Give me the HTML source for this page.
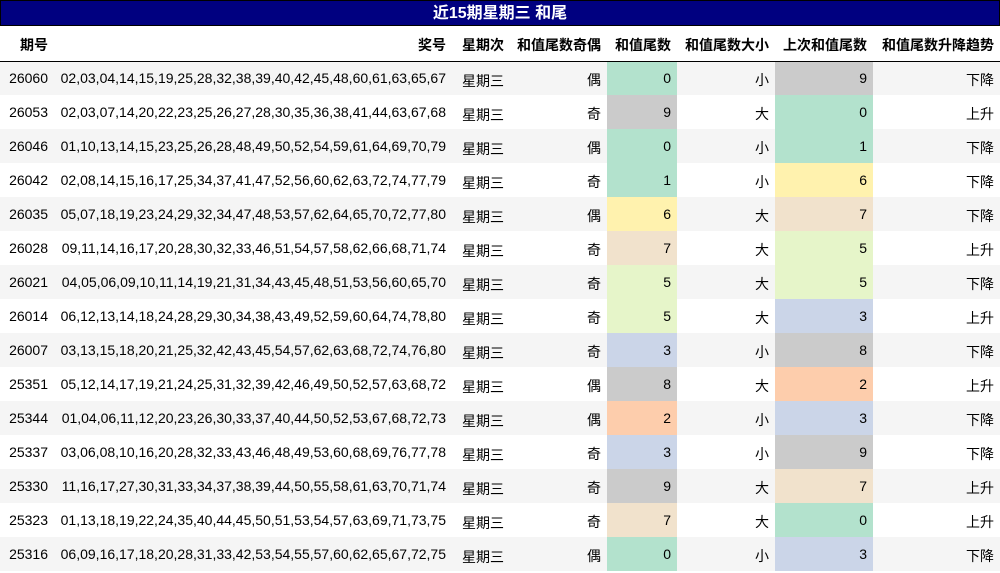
<!DOCTYPE html><html><head><meta charset="utf-8"><style>
body{margin:0;width:1000px;height:573px;overflow:hidden;background:#fff;font-family:"Liberation Sans","Noto Sans CJK SC",sans-serif;color:#000}
.t{position:absolute;left:0;top:0;width:998px;height:24px;background:#000080;border:1px solid #000;color:#fff;font-weight:bold;font-size:16px;text-align:center;line-height:26px}
table{position:absolute;left:0;top:26px;width:1000px;border-collapse:collapse;table-layout:fixed;font-size:14px}
th{height:35px;box-sizing:border-box;font-weight:bold;text-align:right;padding:4px 6px 0 0;border-bottom:1px solid #000;vertical-align:middle;line-height:20px}
td{height:34px;box-sizing:border-box;padding:0 6px 0 0;text-align:right;vertical-align:middle;line-height:20px}
td.c{padding-top:6px}
td.z{padding-top:4px}
tr:nth-child(odd) td{background:#f5f5f5}
td.a{background:#b3e2cd!important}td.b{background:#cbcbcb!important}td.y{background:#fff2ae!important}td.e{background:#f1e2cc!important}td.g{background:#e6f5c9!important}td.u{background:#cbd5e8!important}td.o{background:#fdcdac!important}
</style></head><body>
<div class="t">近15期星期三 和尾</div>
<table>
<colgroup><col style="width:54px"><col style="width:398px"><col style="width:58px"><col style="width:97px"><col style="width:70px"><col style="width:98px"><col style="width:98px"><col style="width:127px"></colgroup>
<thead><tr><th>期号</th><th>奖号</th><th>星期次</th><th>和值尾数奇偶</th><th>和值尾数</th><th>和值尾数大小</th><th>上次和值尾数</th><th>和值尾数升降趋势</th></tr></thead>
<tbody>
<tr><td>26060</td><td>02,03,04,14,15,19,25,28,32,38,39,40,42,45,48,60,61,63,65,67</td><td class="c">星期三</td><td class="z">偶</td><td class="a">0</td><td class="z">小</td><td class="b">9</td><td class="z">下降</td></tr>
<tr><td>26053</td><td>02,03,07,14,20,22,23,25,26,27,28,30,35,36,38,41,44,63,67,68</td><td class="c">星期三</td><td class="z">奇</td><td class="b">9</td><td class="z">大</td><td class="a">0</td><td class="z">上升</td></tr>
<tr><td>26046</td><td>01,10,13,14,15,23,25,26,28,48,49,50,52,54,59,61,64,69,70,79</td><td class="c">星期三</td><td class="z">偶</td><td class="a">0</td><td class="z">小</td><td class="a">1</td><td class="z">下降</td></tr>
<tr><td>26042</td><td>02,08,14,15,16,17,25,34,37,41,47,52,56,60,62,63,72,74,77,79</td><td class="c">星期三</td><td class="z">奇</td><td class="a">1</td><td class="z">小</td><td class="y">6</td><td class="z">下降</td></tr>
<tr><td>26035</td><td>05,07,18,19,23,24,29,32,34,47,48,53,57,62,64,65,70,72,77,80</td><td class="c">星期三</td><td class="z">偶</td><td class="y">6</td><td class="z">大</td><td class="e">7</td><td class="z">下降</td></tr>
<tr><td>26028</td><td>09,11,14,16,17,20,28,30,32,33,46,51,54,57,58,62,66,68,71,74</td><td class="c">星期三</td><td class="z">奇</td><td class="e">7</td><td class="z">大</td><td class="g">5</td><td class="z">上升</td></tr>
<tr><td>26021</td><td>04,05,06,09,10,11,14,19,21,31,34,43,45,48,51,53,56,60,65,70</td><td class="c">星期三</td><td class="z">奇</td><td class="g">5</td><td class="z">大</td><td class="g">5</td><td class="z">下降</td></tr>
<tr><td>26014</td><td>06,12,13,14,18,24,28,29,30,34,38,43,49,52,59,60,64,74,78,80</td><td class="c">星期三</td><td class="z">奇</td><td class="g">5</td><td class="z">大</td><td class="u">3</td><td class="z">上升</td></tr>
<tr><td>26007</td><td>03,13,15,18,20,21,25,32,42,43,45,54,57,62,63,68,72,74,76,80</td><td class="c">星期三</td><td class="z">奇</td><td class="u">3</td><td class="z">小</td><td class="b">8</td><td class="z">下降</td></tr>
<tr><td>25351</td><td>05,12,14,17,19,21,24,25,31,32,39,42,46,49,50,52,57,63,68,72</td><td class="c">星期三</td><td class="z">偶</td><td class="b">8</td><td class="z">大</td><td class="o">2</td><td class="z">上升</td></tr>
<tr><td>25344</td><td>01,04,06,11,12,20,23,26,30,33,37,40,44,50,52,53,67,68,72,73</td><td class="c">星期三</td><td class="z">偶</td><td class="o">2</td><td class="z">小</td><td class="u">3</td><td class="z">下降</td></tr>
<tr><td>25337</td><td>03,06,08,10,16,20,28,32,33,43,46,48,49,53,60,68,69,76,77,78</td><td class="c">星期三</td><td class="z">奇</td><td class="u">3</td><td class="z">小</td><td class="b">9</td><td class="z">下降</td></tr>
<tr><td>25330</td><td>11,16,17,27,30,31,33,34,37,38,39,44,50,55,58,61,63,70,71,74</td><td class="c">星期三</td><td class="z">奇</td><td class="b">9</td><td class="z">大</td><td class="e">7</td><td class="z">上升</td></tr>
<tr><td>25323</td><td>01,13,18,19,22,24,35,40,44,45,50,51,53,54,57,63,69,71,73,75</td><td class="c">星期三</td><td class="z">奇</td><td class="e">7</td><td class="z">大</td><td class="a">0</td><td class="z">上升</td></tr>
<tr><td>25316</td><td>06,09,16,17,18,20,28,31,33,42,53,54,55,57,60,62,65,67,72,75</td><td class="c">星期三</td><td class="z">偶</td><td class="a">0</td><td class="z">小</td><td class="u">3</td><td class="z">下降</td></tr>
</tbody></table>
</body></html>
